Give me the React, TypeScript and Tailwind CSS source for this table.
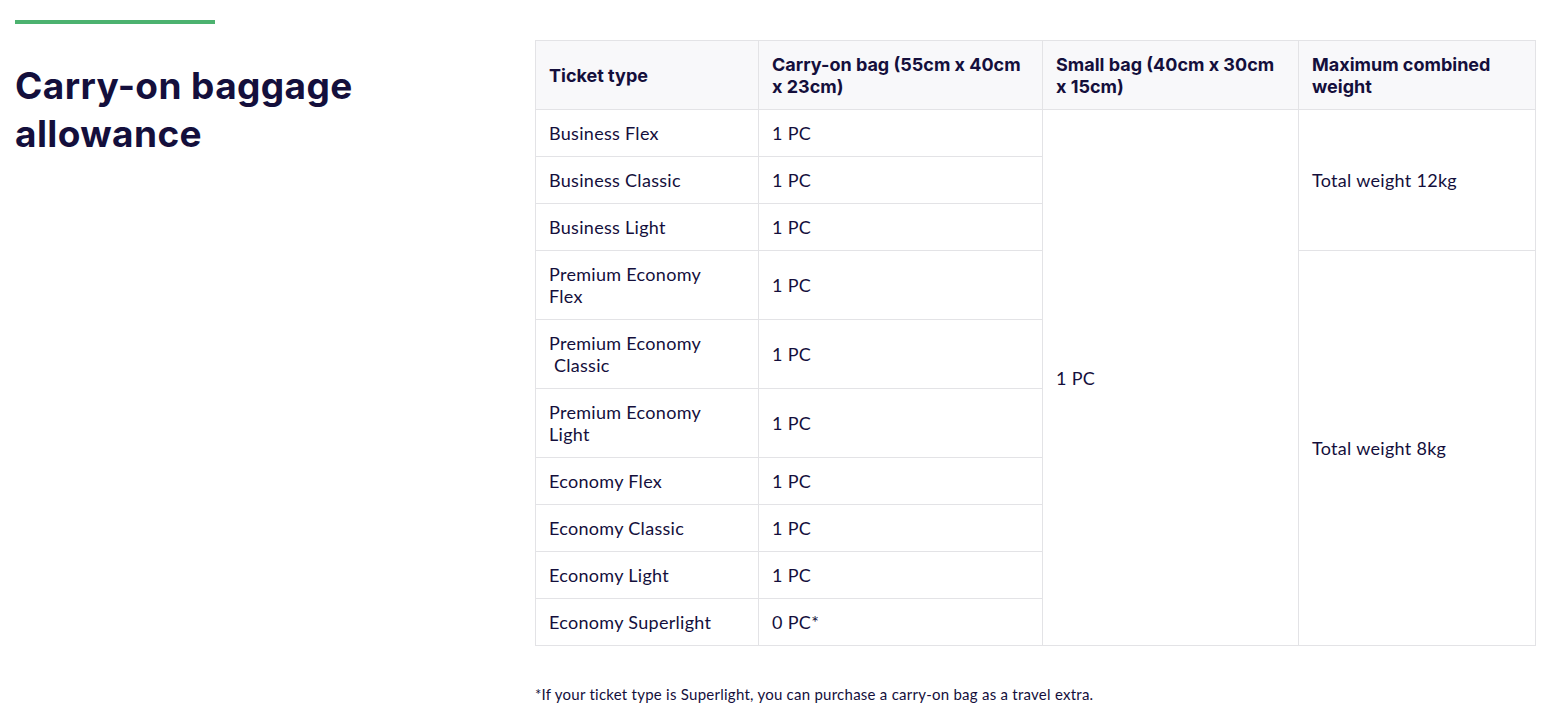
const rows: { type: string; carry: string }[] = [
  { type: "Business Flex", carry: "1 PC" },
  { type: "Business Classic", carry: "1 PC" },
  { type: "Business Light", carry: "1 PC" },
  { type: "Premium Economy Flex", carry: "1 PC" },
  { type: "Premium Economy \u00a0Classic", carry: "1 PC" },
  { type: "Premium Economy Light", carry: "1 PC" },
  { type: "Economy Flex", carry: "1 PC" },
  { type: "Economy Classic", carry: "1 PC" },
  { type: "Economy Light", carry: "1 PC" },
  { type: "Economy Superlight", carry: "0 PC*" },
];

const cell = "border border-[#e3e3e6] px-[13px] py-[12px] align-middle leading-[22px]";
const head = "font-['Inter',sans-serif] font-bold tracking-normal pt-[13px] pb-[11px]";

export default function App() {
  return (
    <main className="min-h-screen bg-white text-[#140f3c] font-['Lato',sans-serif]">
      <div className="flex px-[15px] pt-[20px]">
        <div className="w-[520px] shrink-0">
          <div className="h-[4px] w-[200px] bg-[#4cb26f]" />
          <h1 className="mt-[38px] font-['Inter',sans-serif] text-[37px] font-bold leading-[48px] tracking-[0.4px]">
            Carry-on baggage
            <br />
            allowance
          </h1>
        </div>

        <div className="pt-[20px]">
          <table className="w-[1000px] table-fixed border-collapse text-left text-[18px] tracking-[0.3px]">
            <colgroup>
              <col className="w-[223px]" />
              <col className="w-[284px]" />
              <col className="w-[256px]" />
              <col className="w-[237px]" />
            </colgroup>
            <thead>
              <tr className="bg-[#f8f8fa]">
                <th className={`${cell} ${head} h-[69px]`}>Ticket type</th>
                <th className={`${cell} ${head}`}>
                  Carry-on bag (55cm x 40cm
                  <br />x 23cm)
                </th>
                <th className={`${cell} ${head}`}>
                  Small bag (40cm x 30cm
                  <br />x 15cm)
                </th>
                <th className={`${cell} ${head}`}>Maximum combined weight</th>
              </tr>
            </thead>
            <tbody>
              {rows.map((r, i) => (
                <tr key={r.type}>
                  <td className={`${cell} ${r.type.length > 18 ? "h-[69px]" : "h-[47px]"}`}>
                    <span className="block w-[170px]">{r.type}</span>
                  </td>
                  <td className={cell}>{r.carry}</td>
                  {i === 0 && (
                    <td className={cell} rowSpan={10}>
                      1 PC
                    </td>
                  )}
                  {i === 0 && (
                    <td className={cell} rowSpan={3}>
                      Total weight 12kg
                    </td>
                  )}
                  {i === 3 && (
                    <td className={cell} rowSpan={7}>
                      Total weight 8kg
                    </td>
                  )}
                </tr>
              ))}
            </tbody>
          </table>
          <p className="mt-[38px] text-[15px] leading-[20px] tracking-[0.25px]">
            *If your ticket type is Superlight, you can purchase a carry-on bag as a travel extra.
          </p>
        </div>
      </div>
    </main>
  );
}
